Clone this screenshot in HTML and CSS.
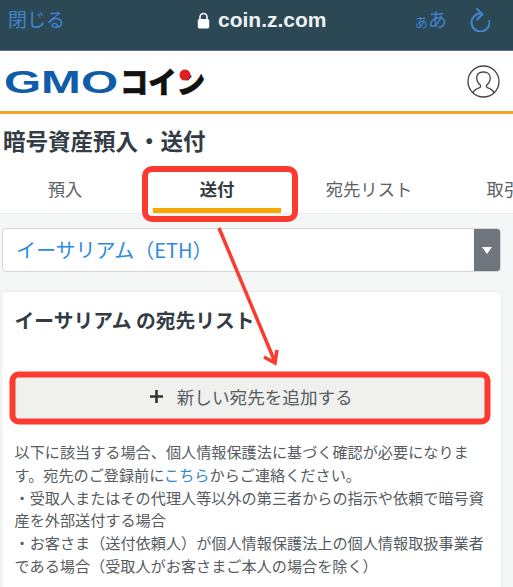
FILE: index.html
```html
<!DOCTYPE html>
<html lang="ja">

<head>
   <meta charset="UTF-8">
   <meta name="viewport" content="width=device-width, initial-scale=1.0">
   <title>暗号資産預入・送付</title>
   <link rel="stylesheet" href="styles.css">
</head>

<body>
   <div class="browserbar">
      <span class="bar-link">閉じる</span>
      <span class="address">
         <svg class="lock" width="13" height="17" viewBox="0 0 13 17">
            <path d="M3 8V5a3.5 3.5 0 0 1 7 0v3" fill="none" stroke="#fff" stroke-width="1.6" />
            <rect x="0.8" y="7" width="11.4" height="9.4" rx="1.6" fill="#fff" />
         </svg>
         coin.z.com
      </span>
      <span class="bar-right">
         <span class="bar-link aa"><small>あ</small>あ</span>
         <svg width="20" height="26" viewBox="0 0 20 26">
            <path d="M10.500 7.500A9 9 0 1 0 19.400 15" fill="none" stroke="#3f86d4" stroke-width="2" stroke-linecap="round" />
            <path d="M7 3L12.500 8.300 7 13.500" fill="none" stroke="#3f86d4" stroke-width="2" stroke-linecap="round" stroke-linejoin="round" />
         </svg>
      </span>
   </div>

   <header class="site-header">
      <svg class="logo" width="204" height="46" viewBox="0 0 204 46">
         <text x="1" y="35" class="logo-gmo" textLength="114" lengthAdjust="spacingAndGlyphs">GMO</text>
         <text x="117" y="35" class="logo-coin" textLength="85" lengthAdjust="spacingAndGlyphs">コイン</text>
         <circle cx="182" cy="17" r="5.500" fill="#e0201c" />
      </svg>
      <svg class="avatar" width="33" height="33" viewBox="0 0 33 33">
         <circle cx="16.500" cy="16.500" r="15.500" fill="none" stroke="#444" stroke-width="1.300" />
         <path d="M6 28c.8-3.400 3.600-4.400 6.600-5.400 1-.5 1.200-1.600.7-2.500-2-1.600-3.600-4-3.600-7 0-3.700 2.600-6.100 6.800-6.100s6.800 2.400 6.800 6.100c0 3-1.600 5.400-3.600 7-.5.9-.3 2 .7 2.500 3 1 5.800 2 6.600 5.400" fill="none" stroke="#444" stroke-width="1.300" />
      </svg>
   </header>

   <div class="top">
      <h1>暗号資産預入・送付</h1>
      <nav class="tabs">
         <a class="tab">預入</a>
         <a class="tab active">送付</a>
         <a class="tab">宛先リスト</a>
         <a class="tab">取引履歴</a>
      </nav>
   </div>

   <main>
      <div class="coin-select">
         <span class="coin-name">イーサリアム（ETH）</span>
         <span class="coin-arrow"></span>
      </div>

      <section class="card">
         <h2>イーサリアム の宛先リスト</h2>
         <button class="add-btn">
            <svg width="13" height="13" viewBox="0 0 13 13">
               <path d="M6.500 0v13M0 6.500h13" stroke="#333" stroke-width="2.600" />
            </svg>
            新しい宛先を追加する
         </button>
         <p class="note">以下に該当する場合、個人情報保護法に基づく確認が必要になります。宛先のご登録前に<a class="link">こちら</a>からご連絡ください。<br>・受取人またはその代理人等以外の第三者からの指示や依頼で暗号資産を外部送付する場合<br>・お客さま（送付依頼人）が個人情報保護法上の個人情報取扱事業者である場合（受取人がお客さまご本人の場合を除く）</p>
      </section>
   </main>

   <!-- red markup drawn over the screenshot -->
   <svg class="markup" width="513" height="587" viewBox="0 0 513 587">
      <rect x="145" y="169" width="150" height="50" rx="7" class="mark" stroke-width="6" />
      <rect x="12.500" y="374.500" width="475" height="47" rx="6" class="mark" stroke-width="6" />
      <path d="M219 228L275 362M264 357l11 6 2-13" class="mark" stroke-width="3.500" />
   </svg>
</body>

</html>
```

FILE: styles.css
```css
* {
   padding: 0;
   margin: 0;
   box-sizing: border-box;
}

html,
body {
   height: 100%;
}

body {
   position: relative;
   overflow: hidden;
   background-color: #f5f6f6;
   font-family: "Noto Sans CJK JP", "Noto Sans", sans-serif;
   color: #333c44;
}

.browserbar {
   height: 51px;
   padding: 0 23px 13px 8px;
   display: flex;
   justify-content: space-between;
   align-items: center;
   background-color: #2c4855;
   border-bottom: 1px solid #5d7480;
}

.bar-link {
   color: #3f86d4;
   font-size: 19px;
}

.address {
   position: absolute;
   left: 197px;
   top: 5px;
   display: flex;
   align-items: center;
   gap: 8px;
   color: #eef1f2;
   font-family: "Liberation Sans", sans-serif;
   font-size: 21px;
   font-weight: bold;
   line-height: 30px;
}

.bar-right {
   display: flex;
   align-items: center;
   gap: 23px;
}

.aa {
   font-size: 19px;
}

.aa small {
   font-size: 13px;
}

.site-header {
   height: 63px;
   padding: 0 13px 0 3px;
   display: flex;
   justify-content: space-between;
   align-items: center;
   background-color: #fff;
   border-bottom: 3px solid #f3a42c;
}

.logo-gmo {
   font-family: "Liberation Sans", sans-serif;
   font-size: 32px;
   font-weight: bold;
   fill: #0f5ca8;
}

.logo-coin {
   font-family: "Noto Sans CJK JP", sans-serif;
   font-size: 30px;
   font-weight: 900;
   fill: #111;
   stroke: #111;
   stroke-width: 0.6px;
}

.top {
   background-color: #fff;
   border-bottom: 1px solid #eceded;
}

h1 {
   padding: 10px 0 0 3px;
   font-size: 22.500px;
   line-height: 33px;
   font-weight: bold;
}

.tabs {
   margin-left: -11px;
   margin-top: 8px;
   height: 48px;
   display: flex;
   white-space: nowrap;
}

.tab {
   flex: 0 0 152px;
   padding-top: 11px;
   text-align: center;
   font-size: 17.300px;
   line-height: 26px;
   color: #5c6266;
   position: relative;
}

.tab.active {
   font-weight: bold;
   color: #333c44;
}

.tab.active::after {
   content: "";
   position: absolute;
   left: 12px;
   right: 12px;
   bottom: 0;
   height: 5px;
   background-color: #f6a800;
}

main {
   padding: 14px 12px 0 2px;
}

.coin-select {
   height: 44px;
   display: flex;
   justify-content: space-between;
   background-color: #fff;
   border: 1px solid #d3d5d7;
   border-radius: 4px;
   overflow: hidden;
}

.coin-name {
   padding-left: 13px;
   font-size: 20px;
   line-height: 42px;
   color: #2c8be0;
}

.coin-arrow {
   width: 26px;
   display: flex;
   justify-content: center;
   align-items: center;
   background-color: #6f767d;
}

.coin-arrow::before {
   content: "";
   border-left: 5px solid transparent;
   border-right: 5px solid transparent;
   border-top: 7px solid #fff;
}

.card {
   margin-top: 20px;
   height: 320px;
   padding: 13px 13px 0 12.500px;
   background-color: #fff;
   border-radius: 4px;
   box-shadow: 0 0 3px rgba(0, 0, 0, 0.1);
}

h2 {
   font-size: 19.800px;
   line-height: 30px;
   font-weight: bold;
}

.add-btn {
   width: 100%;
   height: 41px;
   margin-top: 42px;
   padding-bottom: 2px;
   display: flex;
   justify-content: center;
   align-items: center;
   gap: 14px;
   border: none;
   background-color: #f0f1ef;
   font-family: inherit;
   font-size: 17.600px;
   color: #555b60;
}

.note {
   margin-top: 22px;
   font-size: 15.150px;
   line-height: 22.800px;
   color: #555b60;
}

.link {
   color: #2f86c8;
}

.markup {
   position: absolute;
   left: 0;
   top: 0;
   pointer-events: none;
}

.mark {
   fill: none;
   stroke: #fb3b30;
}
```
